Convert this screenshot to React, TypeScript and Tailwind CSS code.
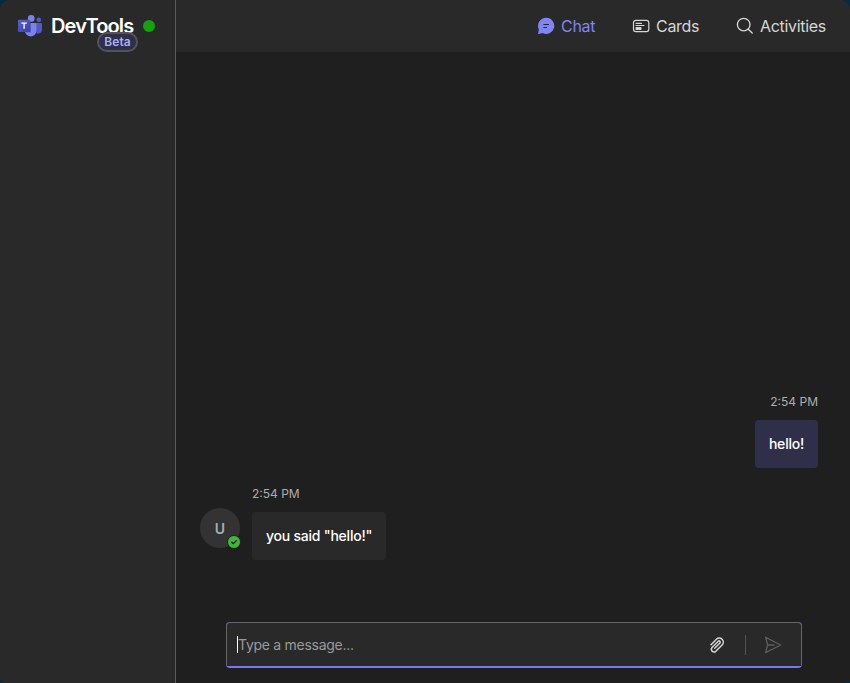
import React from 'react';

function TeamsLogo() {
  return (
    <svg width="24" height="24" viewBox="0 0 24 24" className="shrink-0">
      <defs>
        <linearGradient id="tile" x1="0" y1="0" x2="1" y2="1">
          <stop offset="0" stopColor="#5a62c3" />
          <stop offset="1" stopColor="#3940ab" />
        </linearGradient>
      </defs>
      <circle cx="20.800" cy="5.800" r="2.400" fill="#5059c9" />
      <circle cx="13.200" cy="4.400" r="3.400" fill="#7b83eb" />
      <path d="M17 9h6.100c.5 0 .9.4.9.9v5.600a4 4 0 0 1-4 4h-1.500z" fill="#5059c9" />
      <path d="M8 9h9.400c.6 0 1 .4 1 1v6.800a5.700 5.700 0 0 1-11.400 0V10c0-.6.4-1 1-1z" fill="#7b83eb" />
      <path d="M8 9h5v9.400H7.300L7 10c0-.6.4-1 1-1z" fill="#5961c8" />
      <rect x="0" y="5.800" width="12.200" height="12.200" rx="1" fill="url(#tile)" />
      <path d="M3.400 9.200h5.400M6.100 9.200v5.600" stroke="#fff" strokeWidth="1.300" fill="none" />
    </svg>
  );
}

function ChatIcon() {
  return (
    <svg width="20" height="20" viewBox="0 0 20 20" className="shrink-0">
      <path fill="#7f85f5" d="M10.300 1.800a8.100 8.100 0 1 1-3.800 15.300l-3.800.9a.5.5 0 0 1-.6-.6l.8-3.800A8.100 8.100 0 0 1 10.300 1.800z" />
      <path d="M7.800 8.500h4.800M7.800 11.500h2.800" stroke="#292929" strokeWidth="1" strokeLinecap="round" />
    </svg>
  );
}

function CardsIcon() {
  return (
    <svg width="20" height="20" viewBox="0 0 20 20" className="shrink-0" fill="none" stroke="#d6d6d6" strokeWidth="1.200">
      <rect x="2.500" y="4.300" width="15.300" height="11.400" rx="2.400" />
      <path d="M5 7.300h5.500M5 9.500h8" strokeLinecap="round" />
      <rect x="4.500" y="11" width="6" height="3" rx=".7" fill="#d6d6d6" stroke="none" />
    </svg>
  );
}

function SearchIcon() {
  return (
    <svg width="20" height="20" viewBox="0 0 20 20" className="shrink-0" fill="none" stroke="#d6d6d6" strokeWidth="1.350" strokeLinecap="round">
      <circle cx="8.700" cy="8.600" r="6.300" />
      <path d="m13.300 13.200 3.900 3.900" />
    </svg>
  );
}

function AttachIcon() {
  return (
    <svg width="20" height="20" viewBox="0 0 20 20" className="shrink-0" fill="none" stroke="#d6d6d6" strokeWidth="1.500" strokeLinecap="round">
      <path d="m4 9.700 5.400-5.400a4 4 0 0 1 5.700 5.700l-6.300 6.300a2.700 2.700 0 0 1-3.800-3.800l6.200-6.200a1.200 1.200 0 0 1 1.700 1.700l-5.200 5.200" />
    </svg>
  );
}

function SendIcon() {
  return (
    <svg width="20" height="20" viewBox="0 0 20 20" className="shrink-0" fill="none" stroke="#5c5c5c" strokeWidth="1.300" strokeLinejoin="round" strokeLinecap="round">
      <path d="M2.600 2.400 17.700 10l-15.100 7.600L4.700 10z" />
      <path d="M4.700 10H11" />
    </svg>
  );
}

export default function App() {
  return (
    <div className="h-[683px] w-[850px] overflow-hidden bg-[#032a46] font-['Inter','Liberation_Sans',sans-serif]">
      <div className="flex h-full overflow-hidden rounded-b-[5px] rounded-t-[9px] bg-[#1f1f1f]">
        <aside className="w-44 shrink-0 border-r border-[#5c5c5c] bg-[#292929] pl-[18px]">
          <div className="flex h-[52px] items-center">
            <TeamsLogo />
            <div className="relative ml-[9px] w-[92px] shrink-0">
              <h1 className="whitespace-nowrap text-[20px] font-semibold leading-5 tracking-[-0.85px] text-white">DevTools</h1>
              <span className="absolute left-[46px] top-[16px] flex h-5 w-[41px] items-center justify-center rounded-full border-2 border-[#53535d] bg-[#2f2f4a] text-[12px] font-semibold leading-4 tracking-[0.1px] text-[#aab1fa]">Beta</span>
            </div>
            <span className="size-3 shrink-0 rounded-full bg-[#13a10e]" />
          </div>
        </aside>
        <main className="flex min-w-0 flex-1 flex-col">
          <nav className="flex h-[52px] shrink-0 items-center bg-[#292929] pl-[360px] text-[16px] text-[#d6d6d6]">
            <div className="flex w-[95px] items-center gap-[5px] text-[#7f85f5]">
              <ChatIcon />
              <span className="tracking-[-0.3px]">Chat</span>
            </div>
            <div className="flex w-[104px] items-center gap-[5px]">
              <CardsIcon />
              <span className="tracking-[-0.3px]">Cards</span>
            </div>
            <div className="flex items-center gap-[5px]">
              <SearchIcon />
              <span className="tracking-[-0.32px]">Activities</span>
            </div>
          </nav>
          <section className="flex flex-1 flex-col justify-end px-6 pb-[62px]">
            <div className="mr-2 flex flex-col items-end">
              <time className="mb-[10px] text-[12px] leading-4 text-[#adadad]">2:54 PM</time>
              <div className="flex h-12 w-[63px] items-center justify-center whitespace-nowrap rounded bg-[#2f2f4a] pb-0.5 text-[14px] font-medium tracking-[-0.2px] text-white">hello!</div>
            </div>
            <div className="mt-[18px] flex items-start gap-3">
              <div className="relative mt-[22px] flex size-10 items-center justify-center rounded-full bg-[#333333] text-[14px] font-semibold text-[#adadad]">
                U
                <svg width="14" height="14" viewBox="0 0 14 14" className="absolute left-[27px] top-[27px]">
                  <circle cx="7" cy="7" r="6.500" fill="#3fb73b" stroke="#1f1f1f" />
                  <path d="m4.800 7.200 1.500 1.500 2.900-2.900" stroke="#1f1f1f" strokeWidth="1.300" fill="none" strokeLinecap="round" />
                </svg>
              </div>
              <div>
                <time className="mb-[10px] block text-[12px] leading-4 text-[#adadad]">2:54 PM</time>
                <div className="flex h-12 w-[134px] items-center whitespace-nowrap rounded bg-[#292929] pb-0.5 pl-[14px] text-[14px] font-medium tracking-[-0.23px] text-white">you said "hello!"</div>
              </div>
            </div>
          </section>
          <div className="mb-[15px] ml-[50px] mr-12 h-[46px] shrink-0 overflow-hidden rounded bg-[#7579eb] pb-0.5">
            <div className="flex h-11 items-center rounded-t border border-b-0 border-[#666666] bg-[#292929] pl-[10px]">
              <span className="h-[17px] w-px bg-white" />
              <span className="flex-1 text-[14px] tracking-[-0.28px] text-[#999999]">Type a message...</span>
              <AttachIcon />
              <span className="ml-[18px] mr-[17px] h-5 w-px bg-[#525252]" />
              <SendIcon />
              <span className="w-[18px]" />
            </div>
          </div>
        </main>
      </div>
    </div>
  );
}
